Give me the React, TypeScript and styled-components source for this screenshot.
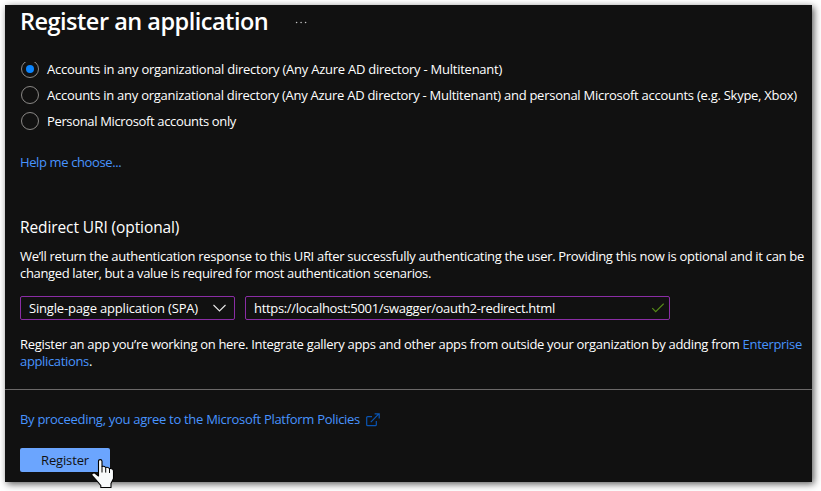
import React from "react";
import styled, { createGlobalStyle } from "styled-components";

const GlobalStyle = createGlobalStyle`
  * { box-sizing: border-box; }
  body {
    margin: 0;
    background: #fff;
    font-family: "Open Sans", "Noto Sans", sans-serif;
    font-size: 13px;
    line-height: 17px;
    color: #fff;
  }
`;

const Page = styled.div`
  height: 491px;
  padding: 5px 9px 9px 5px;
  overflow: hidden;
`;

const Panel = styled.main`
  position: relative;
  display: flex;
  flex-direction: column;
  width: 807px;
  height: 477px;
  background: #111;
  box-shadow: 2px 2px 7px rgba(0, 0, 0, 0.65);
`;

const Header = styled.header`
  display: flex;
  align-items: center;
  height: 32px;
  padding-left: 15px;
`;

const Title = styled.h1`
  width: 275px;
  margin: 0;
  font-size: 23.5px;
  line-height: 32px;
  font-weight: 600;
  letter-spacing: -0.5px;
  white-space: nowrap;
`;

const Dots = styled.svg`
  display: block;
  margin-top: 2px;
`;

const Body = styled.section`
  display: flex;
  flex-direction: column;
  align-items: flex-start;
  height: 334px;
  margin-top: 19px;
  padding-left: 15px;
`;

const RadioList = styled.div`
  display: flex;
  flex-direction: column;
  flex: none;
`;

const RadioRow = styled.label`
  display: flex;
  align-items: center;
  height: 26px;
  padding-left: 1px;
  gap: 8px;
`;

const Circle = styled.span<{ $checked?: boolean; $clipTop?: number }>`
  display: grid;
  place-items: center;
  width: 18px;
  height: 18px;
  border: 1px solid #8a8886;
  border-radius: 50%;
  clip-path: inset(${(p) => p.$clipTop ?? 0}px 0 0 0);
  &::after {
    content: "";
    width: 8px;
    height: 8px;
    border-radius: 50%;
    background: ${(p) => (p.$checked ? "#0a85ff" : "transparent")};
  }
`;

const Text = styled.span<{ $track: number }>`
  white-space: nowrap;
  letter-spacing: ${(p) => p.$track}px;
`;

const Link = styled.a`
  color: #4894fe;
  text-decoration: none;
`;

const Help = styled.div`
  margin-top: 20px;
`;

const Heading = styled.h2`
  margin: 46px 0 0;
  font-size: 15.5px;
  line-height: 20px;
  font-weight: 400;
`;

const Paragraph = styled.p<{ $top: number }>`
  display: flex;
  flex-direction: column;
  margin: ${(p) => p.$top}px 0 0;
`;

const Fields = styled.div`
  display: flex;
  gap: 10px;
  margin-top: 14px;
`;

const Field = styled.div<{ $width: number }>`
  display: flex;
  align-items: center;
  justify-content: space-between;
  width: ${(p) => p.$width}px;
  height: 24px;
  padding: 0 5px 0 8px;
  border: 1px solid #8a2da5;
  border-radius: 2px;
`;

const Footer = styled.footer`
  display: flex;
  flex-direction: column;
  align-items: flex-start;
  margin-top: -1px;
  padding: 21px 0 0 15px;
  border-top: 1px solid #6b6969;
`;

const Policy = styled.div`
  display: flex;
  align-items: center;
  gap: 6px;
  height: 17px;
`;

const Button = styled.button`
  width: 90px;
  height: 24px;
  margin-top: 20px;
  padding: 0;
  border: 0;
  border-radius: 2px;
  background: #6ba5fe;
  color: #111;
  font: inherit;
`;

const Pointer = styled.svg`
  position: absolute;
  left: 86px;
  top: 454px;
`;

export default function App() {
  return (
    <Page>
      <GlobalStyle />
      <Panel>
        <Header>
          <Title>Register an application</Title>
          <Dots width="13" height="3" viewBox="0 0 13 3" fill="#c4c4c4">
            <circle cx="1.6" cy="1.5" r="0.8" />
            <circle cx="6.1" cy="1.5" r="0.8" />
            <circle cx="10.6" cy="1.5" r="0.8" />
          </Dots>
        </Header>
        <Body>
          <RadioList>
            <RadioRow>
              <Circle $checked $clipTop={2} />
              <Text $track={-0.248}>Accounts in any organizational directory (Any Azure AD directory - Multitenant)</Text>
            </RadioRow>
            <RadioRow>
              <Circle />
              <Text $track={-0.263}>
                Accounts in any organizational directory (Any Azure AD directory - Multitenant) and personal Microsoft accounts (e.g. Skype, Xbox)
              </Text>
            </RadioRow>
            <RadioRow>
              <Circle />
              <Text $track={-0.353}>Personal Microsoft accounts only</Text>
            </RadioRow>
          </RadioList>
          <Help>
            <Link href="#"><Text $track={-0.38}>Help me choose...</Text></Link>
          </Help>
          <Heading><Text $track={-0.1}>Redirect URI (optional)</Text></Heading>
          <Paragraph $top={11}>
            <Text $track={-0.309}>
              We’ll return the authentication response to this URI after successfully authenticating the user. Providing this now is optional and it can be
            </Text>
            <Text $track={-0.34}>changed later, but a value is required for most authentication scenarios.</Text>
          </Paragraph>
          <Fields>
            <Field $width={215}>
              <Text $track={-0.179}>Single-page application (SPA)</Text>
              <svg width="18" height="12" viewBox="0 0 18 12" fill="none" stroke="#e8e8e8" strokeWidth="1.1">
                <path d="M2.5 3l6 6 6-6" />
              </svg>
            </Field>
            <Field $width={425}>
              <Text $track={-0.326}>https://localhost:5001/swagger/oauth2-redirect.html</Text>
              <svg width="13" height="12" viewBox="0 0 13 12" fill="none" stroke="#568c18" strokeWidth="1.2">
                <path d="M1.3 6.2l3.4 3.4L12.7 1.8" />
              </svg>
            </Field>
          </Fields>
          <Paragraph $top={16}>
            <Text $track={-0.309}>
              Register an app you’re working on here. Integrate gallery apps and other apps from outside your organization by adding from <Link href="#">Enterprise</Link>
            </Text>
            <Text $track={-0.344}><Link href="#">applications</Link>.</Text>
          </Paragraph>
        </Body>
        <Footer>
          <Policy>
            <Link href="#"><Text $track={-0.295}>By proceeding, you agree to the Microsoft Platform Policies</Text></Link>
            <svg width="14" height="14" viewBox="0 0 14 14" fill="none" stroke="#0a55b4" strokeWidth="1.2">
              <path d="M6 3.6H1.7a1 1 0 0 0-1 1v7.1a1 1 0 0 0 1 1h7.6a1 1 0 0 0 1-1V8" />
              <path d="M4.8 9.2L12.6 1.2M8.6.8h4.6v4.6" />
            </svg>
          </Policy>
          <Button><Text $track={-0.139}>Register</Text></Button>
        </Footer>
        <Pointer width="24" height="30" viewBox="0 0 24 30">
          <path
            d="M7.5 15.5V2.2Q7.5.6 9.2.6T11 2.2V7.5Q13 6.6 14.7 8.5Q17 7.6 18.5 9.6Q22.5 9 22.5 12.5V19.5L20 24.5V28.5H9.8V26.5L4.8 20.5L.9 16.3Q.6 13.8 3.4 13.9L7.5 17Z"
            fill="#f7f9fa" stroke="#000" strokeWidth="1.1" strokeLinejoin="round"
          />
          <path d="M11 7.5v6M14.7 8.6v5M18.5 9.6v4.4" stroke="#000" strokeWidth="1" />
        </Pointer>
      </Panel>
    </Page>
  );
}
